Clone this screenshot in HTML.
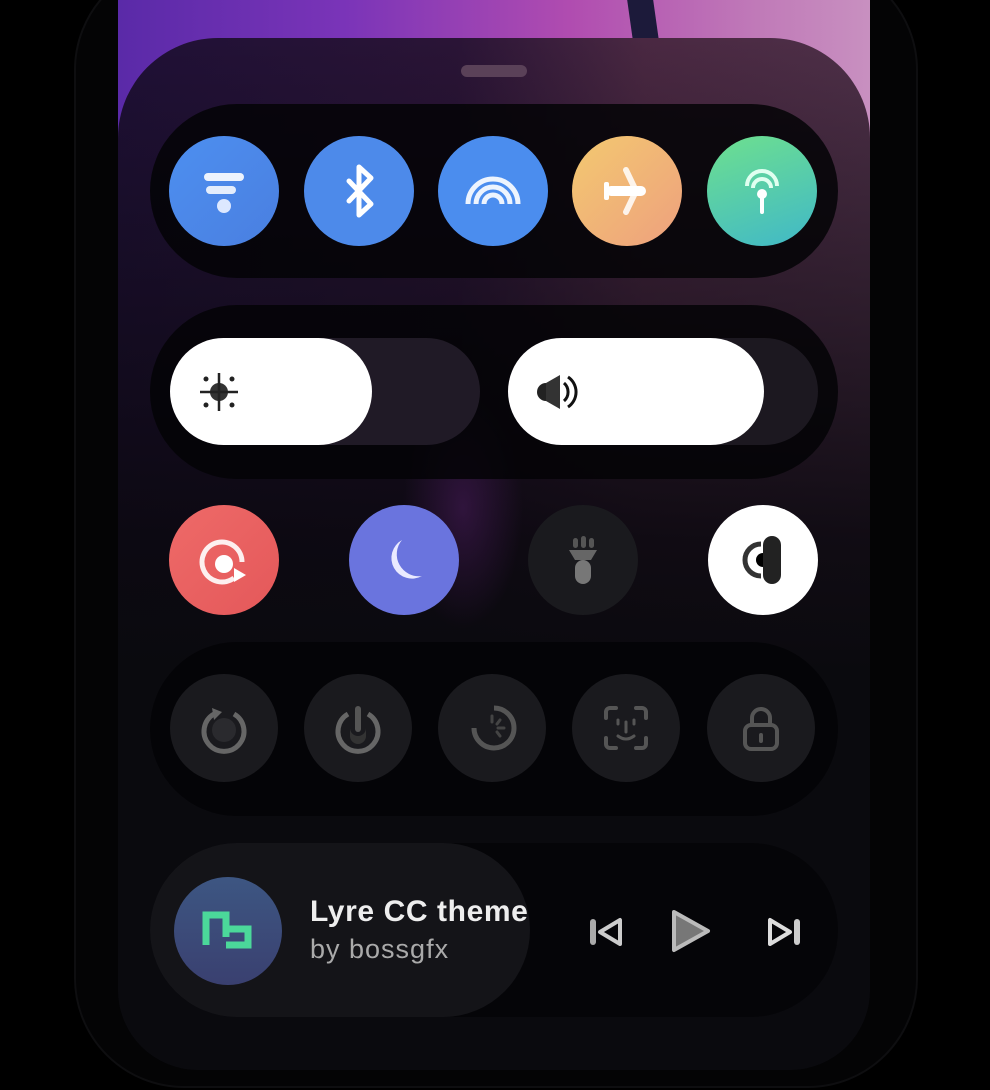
<!DOCTYPE html>
<html><head><meta charset="utf-8"><style>
*{margin:0;padding:0;box-sizing:border-box}
body{width:990px;height:1090px;background:#000;position:relative;overflow:hidden;font-family:"Liberation Sans",sans-serif}
.abs{position:absolute}
.frame{left:74px;top:-40px;width:844px;height:1128px;border-radius:110px;background:#040405;border:2px solid #0e0e10}
.screen{left:118px;top:0;width:752px;height:1070px;border-radius:0 0 80px 80px;overflow:hidden;background:#08080b}
.wall{left:0;top:0;width:752px;height:700px;background:
 linear-gradient(180deg,rgba(7,7,10,0) 0%,rgba(7,7,10,0) 30%,rgba(7,7,10,1) 90%),
 linear-gradient(90deg,#5a2aa8 0%,#7a34b8 30%,#b04cb0 60%,#c07ab8 85%,#c890c0 100%)}
.stick{left:512px;top:-10px;width:26px;height:60px;background:#1c1a3a;transform:skewX(8deg)}
.panel{left:0;top:38px;width:752px;height:1040px;border-radius:100px 100px 0 0;background:
 radial-gradient(ellipse 60px 120px at 345px 470px,rgba(80,30,100,0.5),rgba(80,30,100,0)),
 linear-gradient(180deg,rgba(10,8,14,0) 0px,rgba(10,8,14,0.9) 500px,#0a0a0e 640px),
 linear-gradient(90deg,#1f1036 0%,#2a1436 45%,#4a2842 70%,#4e3048 100%)}
.handle{left:343px;top:65px;width:66px;height:12px;border-radius:6px;background:#5a4158}
.pill{left:32px;width:688px;height:174px;border-radius:87px;background:rgba(3,3,6,0.85)}
.c{position:absolute;width:110px;height:110px;border-radius:50%;display:flex;align-items:center;justify-content:center}
.g{background:#1a1a1e}
</style></head><body>
<div class="abs frame"></div>
<div class="abs screen">
 <div class="abs wall"></div>
 <div class="abs stick"></div>
 <div class="abs panel"></div>
 <div class="abs handle"></div>

 <div class="abs pill" style="top:104px"></div>
 <div class="c" style="left:51px;top:136px;background:linear-gradient(135deg,#4d8ff0,#4a7fe0)">
  <svg width="60" height="60" viewBox="0 0 60 60"><rect x="10" y="12" width="40" height="8" rx="4" fill="#fff" opacity=".9"/><rect x="12" y="25" width="30" height="8" rx="4" fill="#fff" opacity=".85"/><circle cx="30" cy="45" r="7" fill="#dde8ff"/></svg></div>
 <div class="c" style="left:186px;top:136px;background:#4d8aea">
  <svg width="60" height="60" viewBox="0 0 60 60"><path d="M30 6V54M30 6L42 17L20 40M30 54L42 43L20 20" stroke="#fff" stroke-width="5" fill="none" stroke-linecap="round" stroke-linejoin="round"/></svg></div>
 <div class="c" style="left:320px;top:136px;background:#4b8dee">
  <svg width="70" height="70" viewBox="0 0 70 70"><path d="M10 48A25 25 0 0 1 60 48M18 48A17 17 0 0 1 52 48M26 48A9 9 0 0 1 44 48" stroke="#fff" stroke-width="5" fill="none" opacity=".9"/></svg></div>
 <div class="c" style="left:454px;top:136px;background:linear-gradient(135deg,#f3c970,#eea07e)">
  <svg width="70" height="70" viewBox="0 0 70 70"><rect x="14" y="30" width="40" height="10" rx="5" fill="#fff"/><path d="M34 14L44 35L34 56" stroke="#fff" stroke-width="6" fill="none" stroke-linecap="round" opacity=".85"/><rect x="12" y="26" width="5" height="18" rx="2" fill="#fff"/></svg></div>
 <div class="c" style="left:589px;top:136px;background:linear-gradient(160deg,#6ee08e,#40b8c8)">
  <svg width="70" height="70" viewBox="0 0 70 70"><path d="M20 30A15 15 0 0 1 50 30M26 32A9 9 0 0 1 44 32" stroke="#e0fff0" stroke-width="4" fill="none"/><circle cx="35" cy="38" r="5" fill="#fff"/><rect x="33" y="40" width="4" height="18" rx="2" fill="#fff"/></svg></div>

 <div class="abs pill" style="top:305px"></div>
 <div class="abs" style="left:52px;top:338px;width:310px;height:107px;border-radius:54px;background:#201a26"></div>
 <div class="abs" style="left:52px;top:338px;width:202px;height:107px;border-radius:54px;background:#fff">
  <svg class="abs" style="left:26px;top:31px" width="46" height="46" viewBox="0 0 46 46"><circle cx="23" cy="23" r="9" fill="#333"/><path d="M23 4V42M4 23H42" stroke="#222" stroke-width="2.5"/><circle cx="10" cy="10" r="2.5" fill="#222"/><circle cx="36" cy="10" r="2.5" fill="#222"/><circle cx="10" cy="36" r="2.5" fill="#222"/><circle cx="36" cy="36" r="2.5" fill="#222"/></svg></div>
 <div class="abs" style="left:390px;top:338px;width:310px;height:107px;border-radius:54px;background:#1c1820"></div>
 <div class="abs" style="left:390px;top:338px;width:256px;height:107px;border-radius:54px;background:#fff">
  <svg class="abs" style="left:26px;top:31px" width="50" height="46" viewBox="0 0 50 46"><circle cx="12" cy="23" r="9" fill="#222"/><path d="M12 14L26 6V40L12 32Z" fill="#333"/><path d="M30 14A12 12 0 0 1 30 32M34 8A18 18 0 0 1 34 38" stroke="#111" stroke-width="3" fill="none"/></svg></div>

 <div class="c" style="left:51px;top:505px;background:linear-gradient(135deg,#ee6a68,#e4585a)">
  <svg width="60" height="60" viewBox="0 0 60 60"><path d="M40 48A20 20 0 1 1 48 32" stroke="#fff" stroke-width="5" fill="none" opacity=".9"/><circle cx="30" cy="34" r="9" fill="#fff"/><path d="M40 38L52 45L40 52Z" fill="#fff"/></svg></div>
 <div class="c" style="left:231px;top:505px;background:#6a74de">
  <svg width="60" height="60" viewBox="0 0 60 60"><path d="M28 10A22 22 0 0 0 48 46A20 20 0 0 1 28 10Z" fill="#eaeaff"/></svg></div>
 <div class="c g" style="left:410px;top:505px">
  <svg width="60" height="60" viewBox="0 0 60 60"><rect x="20" y="8" width="5" height="10" rx="2.5" fill="#555"/><rect x="28" y="6" width="5" height="12" rx="2.5" fill="#555"/><rect x="36" y="8" width="5" height="10" rx="2.5" fill="#555"/><path d="M16 20H44L38 30H22Z" fill="#666"/><rect x="22" y="30" width="16" height="24" rx="8" fill="#777"/></svg></div>
 <div class="c" style="left:590px;top:505px;background:#fff">
  <svg width="60" height="60" viewBox="0 0 60 60"><path d="M28 14A16 16 0 0 0 28 46" stroke="#333" stroke-width="5" fill="none"/><circle cx="30" cy="30" r="7" fill="#000"/><rect x="30" y="6" width="18" height="48" rx="9" fill="#222"/></svg></div>

 <div class="abs pill" style="top:642px"></div>
 <div class="c g" style="left:52px;top:674px;width:108px;height:108px">
  <svg width="60" height="60" viewBox="0 0 60 60"><path d="M20 16A20 20 0 1 0 40 16" stroke="#666" stroke-width="5" fill="none"/><circle cx="30" cy="32" r="12" fill="#2a2a2e"/><path d="M18 10L28 14L20 22Z" fill="#666"/></svg></div>
 <div class="c g" style="left:186px;top:674px;width:108px;height:108px">
  <svg width="60" height="60" viewBox="0 0 60 60"><path d="M20 16A20 20 0 1 0 40 16" stroke="#666" stroke-width="5" fill="none"/><path d="M22 30A8 8 0 0 0 38 30V38A8 8 0 0 1 22 38Z" fill="#333"/><rect x="27" y="8" width="6" height="26" rx="3" fill="#555"/></svg></div>
 <div class="c g" style="left:320px;top:674px;width:108px;height:108px">
  <svg width="60" height="60" viewBox="0 0 60 60"><path d="M32 10A20 20 0 1 1 12 30" stroke="#555" stroke-width="5" fill="none"/><path d="M30 18V24M38 22L35 26M42 30H36M38 38L35 34" stroke="#444" stroke-width="3" stroke-linecap="round"/></svg></div>
 <div class="c g" style="left:454px;top:674px;width:108px;height:108px">
  <svg width="60" height="60" viewBox="0 0 60 60"><path d="M10 20V14A4 4 0 0 1 14 10H20M40 10H46A4 4 0 0 1 50 14V20M50 40V46A4 4 0 0 1 46 50H40M20 50H14A4 4 0 0 1 10 46V40" stroke="#555" stroke-width="4" fill="none" stroke-linecap="round"/><path d="M22 22V26M38 22V26M30 24V34M22 38Q30 44 38 38" stroke="#555" stroke-width="3" fill="none" stroke-linecap="round"/></svg></div>
 <div class="c g" style="left:589px;top:674px;width:108px;height:108px">
  <svg width="60" height="60" viewBox="0 0 60 60"><path d="M21 28V20A9 9 0 0 1 39 20V28" stroke="#555" stroke-width="4" fill="none"/><rect x="14" y="27" width="32" height="24" rx="6" stroke="#555" stroke-width="4" fill="none"/><rect x="28" y="35" width="4" height="10" rx="2" fill="#555"/></svg></div>

 <div class="abs pill" style="top:843px;background:rgba(5,5,8,0.95)"></div>
 <div class="abs" style="left:32px;top:843px;width:380px;height:174px;border-radius:87px;background:#141418"></div>
 <div class="c" style="left:56px;top:877px;width:108px;height:108px;background:linear-gradient(180deg,#3d5682,#3a4070)">
  <svg width="60" height="60" viewBox="0 0 60 60"><path d="M8 44V14H28V36M28 28H50V44H28" stroke="#4bd89a" stroke-width="7" fill="none"/></svg></div>
 <div class="abs" style="left:192px;top:895px;color:#eee;font-weight:bold;font-size:30px;letter-spacing:0.6px;white-space:nowrap">Lyre CC theme</div>
 <div class="abs" style="left:192px;top:934px;color:#aaa;font-size:27px;letter-spacing:1px;white-space:nowrap">by bossgfx</div>
 <svg class="abs" style="left:470px;top:916px" width="36" height="32" viewBox="0 0 36 32"><rect x="2" y="3" width="6" height="26" rx="3" fill="#aaa"/><path d="M32 4V28L12 16Z" stroke="#ccc" stroke-width="4" fill="none" stroke-linejoin="round"/></svg>
 <svg class="abs" style="left:550px;top:908px" width="44" height="46" viewBox="0 0 44 46"><path d="M6 4L40 23L6 42Z" fill="#777" stroke="#bbb" stroke-width="4" stroke-linejoin="round"/></svg>
 <svg class="abs" style="left:648px;top:916px" width="36" height="32" viewBox="0 0 36 32"><rect x="28" y="3" width="6" height="26" rx="3" fill="#ccc"/><path d="M4 4V28L24 16Z" stroke="#ddd" stroke-width="4" fill="none" stroke-linejoin="round"/></svg>
</div>
</body></html>
